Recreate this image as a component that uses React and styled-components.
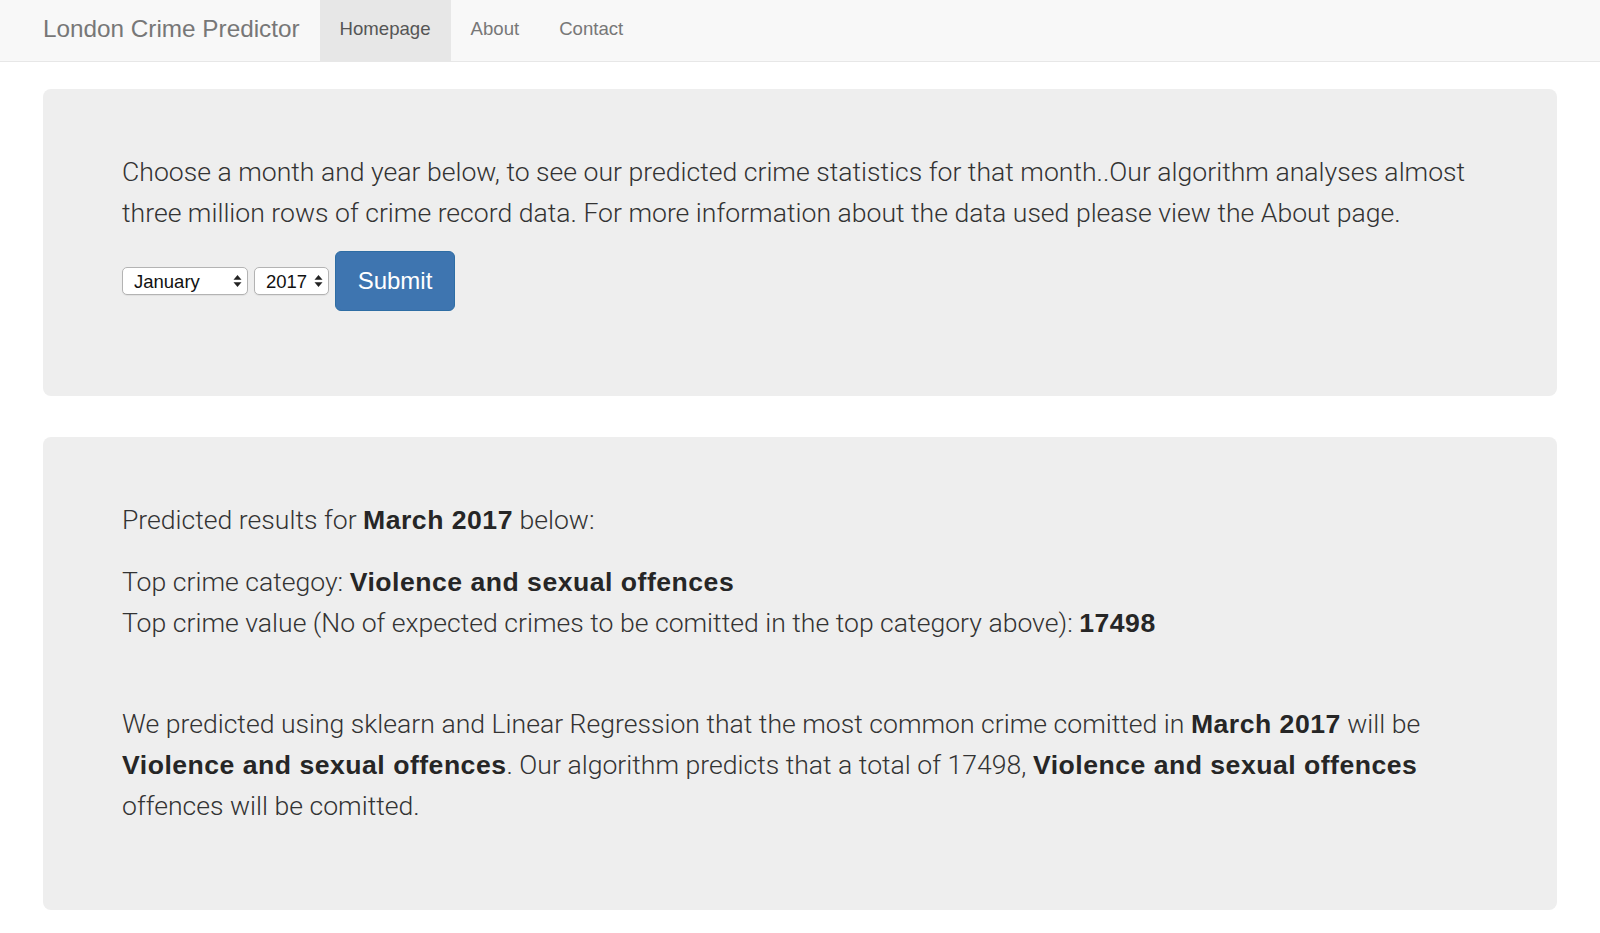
import React from "react";
import styled, { createGlobalStyle } from "styled-components";

const GlobalStyle = createGlobalStyle`
	body {
		margin: 0;
		background: #fff;
		font-family: "Liberation Sans", Arial, sans-serif;
		color: #333;
	}
`;

const Navbar = styled.nav`
	display: flex;
	align-items: stretch;
	height: 61px;
	padding-left: 43px;
	background: #f8f8f8;
	border-bottom: 1px solid #e7e7e7;
`;

const Brand = styled.a`
	display: flex;
	align-items: center;
	padding: 0 20px 3px 0;
	font-size: 24.3px;
	color: #777;
	text-decoration: none;
`;

const NavLinks = styled.ul`
	display: flex;
	list-style: none;
	margin: 0;
	padding: 0;
`;

const NavItem = styled.li`
	display: flex;
	align-items: center;
	padding: 0 20px 3px;
	font-size: 18.6px;
	color: ${props => (props.active ? "#555" : "#777")};
	background: ${props => (props.active ? "#e7e7e7" : "transparent")};
`;

const Main = styled.main`
	padding: 27px 43px 20px;
`;

const Jumbotron = styled.section`
	background: #eee;
	border-radius: 8px;
	padding: 62px 79px ${props => props.bottom || 83}px;
	margin-bottom: 41px;
`;

const Lead = styled.p`
	margin: 0 0 ${props => props.gap || 0}px;
	font-family: Roboto, "Liberation Sans", sans-serif;
	font-weight: 300;
	font-size: 26.6px;
	line-height: 41px;
	color: #333;

	strong {
		font-family: "Liberation Sans", Arial, sans-serif;
		font-weight: 700;
		line-height: 1;
		letter-spacing: 0.5px;
		color: #262626;
	}
`;

const Form = styled.form`
	display: flex;
	align-items: center;
	gap: 6px;
`;

const SelectWrap = styled.div`
	position: relative;
	width: ${props => props.width}px;

	svg {
		position: absolute;
		right: 6px;
		top: 8px;
		pointer-events: none;
	}
`;

const Select = styled.select`
	appearance: none;
	width: 100%;
	height: 28px;
	padding: 0 20px 0 11px;
	font-family: "Liberation Sans", Arial, sans-serif;
	font-size: 18.5px;
	color: #111;
	background: #fff;
	border: 1px solid #b3b3b3;
	border-radius: 5px;
	box-shadow: 0 1px 1px rgba(0, 0, 0, 0.06);
`;

const Button = styled.button`
	width: 120px;
	height: 60px;
	font-family: "Liberation Sans", Arial, sans-serif;
	font-size: 24px;
	color: #fff;
	background: #3e75b0;
	border: 1px solid #2e6da4;
	border-radius: 6px;
`;

const Arrows = () => (
	<svg width="9" height="12" viewBox="0 0 9 12">
		<path d="M4.5 0 L8.5 4.8 L0.5 4.8 Z" fill="#222" />
		<path d="M4.5 12 L8.5 7.2 L0.5 7.2 Z" fill="#222" />
	</svg>
);

const App = () => (
	<>
		<GlobalStyle />
		<Navbar>
			<Brand href="#">London Crime Predictor</Brand>
			<NavLinks>
				<NavItem active>Homepage</NavItem>
				<NavItem>About</NavItem>
				<NavItem>Contact</NavItem>
			</NavLinks>
		</Navbar>

		<Main>
			<Jumbotron bottom={85}>
				<Lead gap={18}>
					Choose a month and year below, to see our predicted crime statistics for that
					month..Our algorithm analyses almost three million rows of crime record data. For
					more information about the data used please view the About page.
				</Lead>
				<Form onSubmit={e => e.preventDefault()}>
					<SelectWrap width={126}>
						<Select defaultValue="January">
							<option>January</option>
							<option>February</option>
							<option>March</option>
						</Select>
						<Arrows />
					</SelectWrap>
					<SelectWrap width={75}>
						<Select defaultValue="2017">
							<option>2017</option>
							<option>2018</option>
						</Select>
						<Arrows />
					</SelectWrap>
					<Button type="submit">Submit</Button>
				</Form>
			</Jumbotron>

			<Jumbotron bottom={84}>
				<Lead gap={21}>
					Predicted results for <strong>March 2017</strong> below:
				</Lead>
				<Lead gap={60}>
					Top crime categoy: <strong>Violence and sexual offences</strong>
					<br />
					Top crime value (No of expected crimes to be comitted in the top category above):{" "}
					<strong>17498</strong>
				</Lead>
				<Lead>
					We predicted using sklearn and Linear Regression that the most common crime comitted in{" "}
					<strong>March 2017</strong> will be <strong>Violence and sexual offences</strong>. Our
					algorithm predicts that a total of 17498, <strong>Violence and sexual offences</strong>{" "}
					offences will be comitted.
				</Lead>
			</Jumbotron>
		</Main>
	</>
);

export default App;
